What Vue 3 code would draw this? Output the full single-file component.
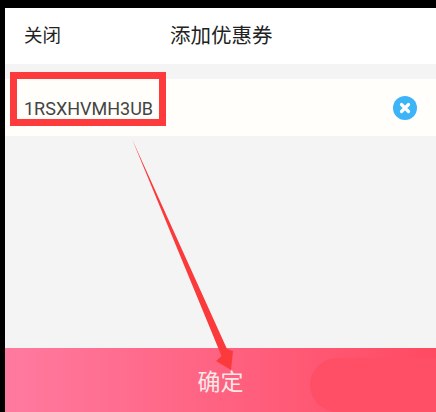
<script setup>
const couponCode = '1RSXHVMH3UB'
</script>

<template>
  <div class="screen">
    <div class="page">
      <div class="header">
        <span class="close">关闭</span>
        <span class="title">添加优惠券</span>
      </div>
      <div class="input-row">
        <span class="code">{{ couponCode }}</span>
        <svg class="clear" viewBox="0 0 24 24" width="24" height="24">
          <circle cx="12" cy="12" r="12" fill="#3db4f8" />
          <path d="M8.5 8.5l7 7M15.5 8.5l-7 7" stroke="#fff" stroke-width="3.2" stroke-linecap="round" />
        </svg>
      </div>
      <div class="spacer"></div>
      <div class="confirm">
        <span class="confirm-text">确定</span>
        <div class="blob"></div>
      </div>
    </div>
    <div class="highlight"></div>
    <svg class="arrow" viewBox="0 0 436 412" width="436" height="412">
      <polygon points="132,139 227,349 233,351 231,370 216,361 221.5,356" fill="#fb3a3c" />
    </svg>
  </div>
</template>

<style scoped>
.screen {
  position: relative;
  width: 436px;
  height: 412px;
  padding: 8px 0 0 5px;
  box-sizing: border-box;
  background: #000;
  overflow: hidden;
  font-family: "Liberation Sans", "Noto Sans CJK SC", sans-serif;
}

.page {
  display: flex;
  flex-direction: column;
  height: 100%;
  background: #f4f4f4;
}

.header {
  display: flex;
  align-items: center;
  height: 56px;
  flex-shrink: 0;
  padding: 0 0 5px 19px;
  box-sizing: border-box;
  background: #fff;
  color: #222;
}

.close {
  font-size: 18.5px;
}

.title {
  margin-left: 109px;
  font-size: 20.5px;
}

.input-row {
  display: flex;
  align-items: center;
  justify-content: space-between;
  height: 57px;
  margin-top: 15px;
  padding: 0 19px;
  background: #fffefa;
}

.code {
  position: relative;
  top: 1px;
  font-family: Roboto, sans-serif;
  font-size: 18px;
  color: #444;
}

.spacer {
  flex: 1;
}

.confirm {
  position: relative;
  display: flex;
  align-items: center;
  justify-content: center;
  height: 64px;
  background: linear-gradient(to right, #ff7aa0, #ff4a62);
}

.confirm-text {
  position: relative;
  z-index: 1;
  font-size: 23px;
  color: #f8e8e8;
}

.blob {
  position: absolute;
  right: 0;
  top: 10px;
  width: 126px;
  height: 54px;
  border-radius: 30px 0 0 30px;
  background: #ff4f66;
}

.highlight {
  position: absolute;
  left: 10px;
  top: 72px;
  width: 156px;
  height: 54px;
  box-sizing: border-box;
  border: 7px solid #fd3a3c;
}

.arrow {
  position: absolute;
  left: 0;
  top: 0;
}
</style>
